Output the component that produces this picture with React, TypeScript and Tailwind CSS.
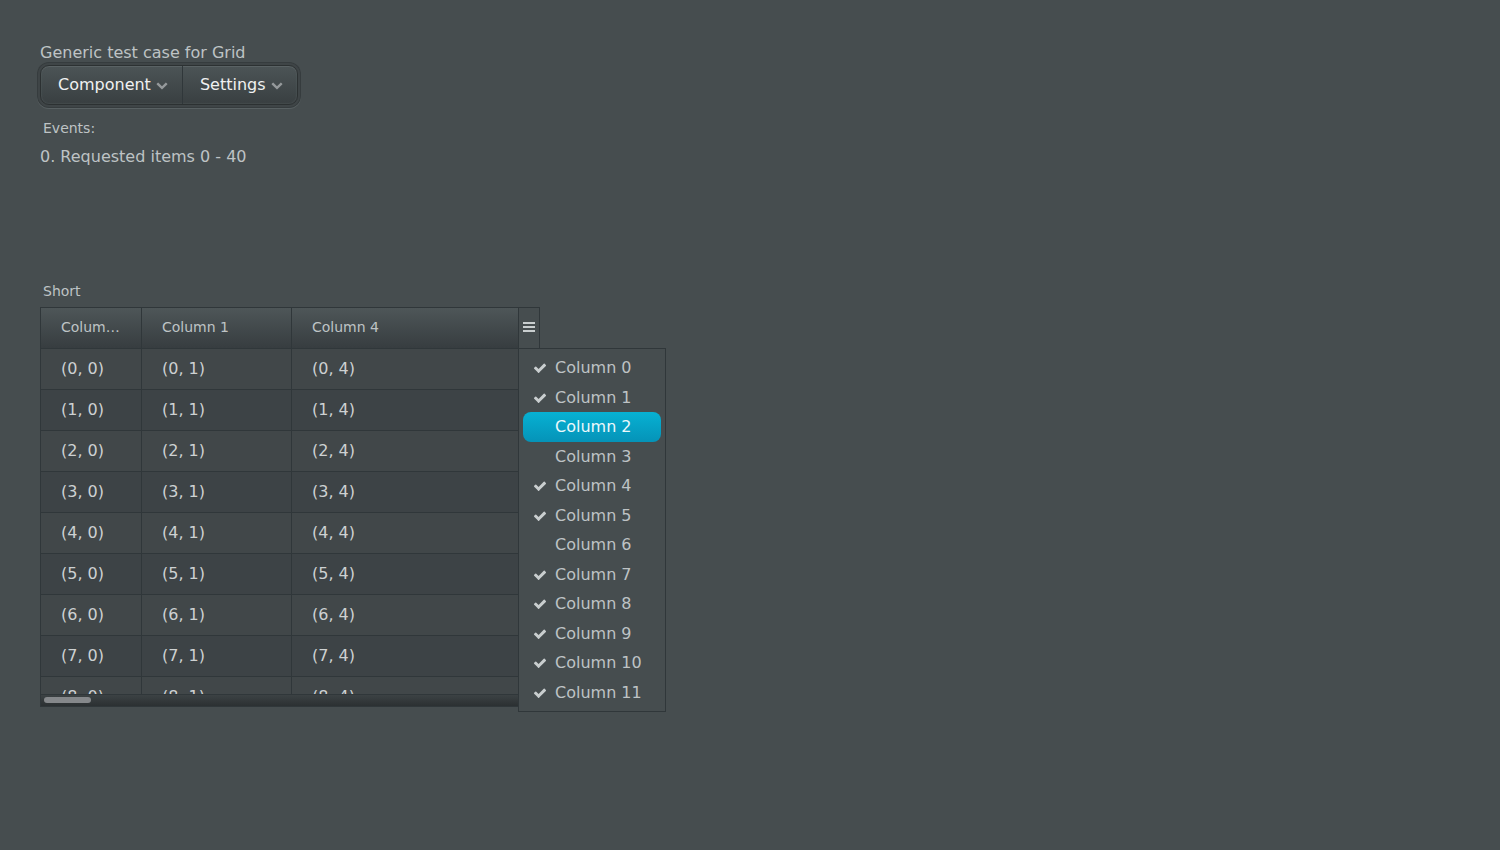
import { Fragment } from "react";

const columns = ["0", "1", "4"];
const rows = [0, 1, 2, 3, 4, 5, 6, 7, 8];
const toggles = [
  { name: "Column 0", shown: true },
  { name: "Column 1", shown: true },
  { name: "Column 2", shown: false },
  { name: "Column 3", shown: false },
  { name: "Column 4", shown: true },
  { name: "Column 5", shown: true },
  { name: "Column 6", shown: false },
  { name: "Column 7", shown: true },
  { name: "Column 8", shown: true },
  { name: "Column 9", shown: true },
  { name: "Column 10", shown: true },
  { name: "Column 11", shown: true },
];

function Chevron() {
  return (
    <svg viewBox="0 0 1792 1792" className="mb-px size-3 fill-[#95999b]" aria-hidden="true">
      <path d="M1683 808l-742 741q-19 19-45 19t-45-19l-742-741q-19-19-19-45.500t19-45.500l166-165q19-19 45-19t45 19l531 531 531-531q19-19 45-19t45 19l166 165q19 19 19 45.500t-19 45.500z" />
    </svg>
  );
}

function Check() {
  return (
    <svg viewBox="0 0 1792 1792" className="size-3.5 fill-current" aria-hidden="true">
      <path d="M1671 566q0 40-28 68l-724 724-136 136q-28 28-68 28t-68-28l-136-136-362-362q-28-28-28-68t28-68l136-136q28-28 68-28t68 28l294 295 656-657q28-28 68-28t68 28l136 136q28 28 28 68z" />
    </svg>
  );
}

function MenuBar() {
  return (
    <nav className="flex h-10 w-fit overflow-visible rounded-[9px] border border-[#2c3132] bg-linear-to-b from-[#4c5456] to-[#393f41] text-[#f0f1f1] shadow-[inset_0_1px_0_#5a6264,inset_0_0_2px_#5a6264,0_0_0_2px_#3f4547,0_0_0_3px_#363c3e,0_1px_0_3px_#596163]">
      {["Component", "Settings"].map((label, i) => (
        <Fragment key={label}>
          {i > 0 && <span className="w-px bg-[#30373a]" />}
          <button type="button" className="flex items-center gap-[5px] pr-3.5 pl-[17px]">
            {label}
            <Chevron />
          </button>
        </Fragment>
      ))}
    </nav>
  );
}

function ColumnMenu() {
  return (
    <div
      role="menu"
      aria-label="Columns"
      className="absolute top-[41px] left-[478px] flex h-[364px] w-[148px] flex-col border border-[#30373a] bg-[#464d4f] p-1"
    >
      {toggles.map(({ name, shown }) => (
        <button
          key={name}
          type="button"
          role="menuitemcheckbox"
          aria-checked={shown}
          className={
            name === "Column 2"
              ? "flex flex-1 items-center rounded-lg bg-linear-to-b from-[#07b1d3] to-[#0593b8] pt-px pl-2 text-[#ecf8fb]"
              : "flex flex-1 items-center pt-px pl-2 text-[#bec3c5]"
          }
        >
          <span className="w-6 pl-0.5 text-[#c9cecf]">{shown && <Check />}</span>
          {name}
        </button>
      ))}
    </div>
  );
}

function Grid() {
  return (
    <div className="relative w-[500px]">
      <div className="flex h-[400px] flex-col border border-[#30373a]">
        <div className="min-h-0 flex-1 overflow-hidden">
          <table className="w-full table-fixed border-separate border-spacing-0 text-left">
            <colgroup>
              <col className="w-[101px]" />
              <col className="w-[150px]" />
              <col />
            </colgroup>
            <thead>
              <tr>
                {columns.map((c) => (
                  <th
                    key={c}
                    scope="col"
                    className="h-[41px] truncate border-r border-b border-[#30373a] bg-linear-to-b from-[#4e5658] to-[#373d40] px-5 pb-0.5 text-sm font-normal"
                  >
                    Column {c}
                  </th>
                ))}
              </tr>
            </thead>
            <tbody>
              {rows.map((r) => (
                <tr key={r} className="bg-[#414749] even:bg-[#3d4346]">
                  {columns.map((c) => (
                    <td key={c} className="h-[41px] border-r border-b border-[#30373a] px-5 py-0 text-[#cdd1d2]">
                      ({r}, {c})
                    </td>
                  ))}
                </tr>
              ))}
            </tbody>
          </table>
        </div>
        <div className="h-3 border-t border-[#30373a] bg-linear-to-b from-[#3c4244] to-[#2b3032] px-[3px] pt-0.5">
          <div className="h-1.5 w-[47px] rounded-full bg-[#85888b]" />
        </div>
      </div>
      <button
        type="button"
        aria-label="Toggle columns"
        className="absolute top-0 right-0 flex h-[42px] w-[22px] flex-col items-center justify-center gap-0.5 border border-[#30373a] bg-[#464d4f] pb-0.5"
      >
        <span className="h-0.5 w-3 bg-[#c9cecf]" />
        <span className="h-0.5 w-3 bg-[#c9cecf]" />
        <span className="h-0.5 w-3 bg-[#c9cecf]" />
      </button>
      <ColumnMenu />
    </div>
  );
}

export default function App() {
  return (
    <main className="min-h-screen bg-[#464d4f] p-10 font-['DejaVu_Sans',sans-serif] text-base text-[#bec3c5]">
      <h1 className="h-[25px] leading-[25px]">Generic test case for Grid</h1>
      <MenuBar />
      <section className="mt-3 h-[163px]">
        <h2 className="px-[3px] text-sm leading-[22px]">Events:</h2>
        <p className="mt-1.5 leading-6">0. Requested items 0 - 40</p>
      </section>
      <section>
        <h2 className="h-[27px] px-[3px] text-sm leading-[22px]">Short</h2>
        <Grid />
      </section>
    </main>
  );
}
